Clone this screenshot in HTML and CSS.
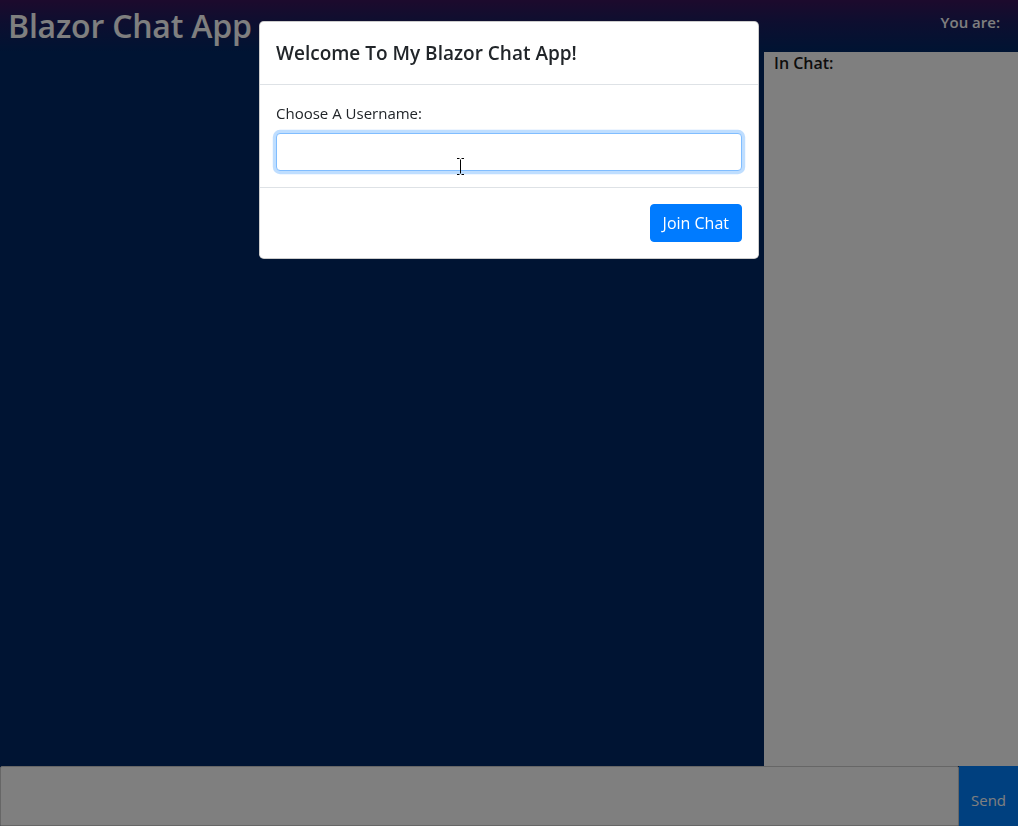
FILE: index.html
```html
<!DOCTYPE html>
<html lang="en">
<head>
<meta charset="utf-8">
<title>Blazor Chat App</title>
<link rel="stylesheet" href="styles.css">
</head>
<body>
<div class="app">
  <header class="top">
    <h1 class="brand">Blazor Chat App</h1>
    <div class="you">You are:</div>
  </header>
  <main class="main">
    <section class="messages"></section>
    <aside class="users"><div class="users-title">In Chat:</div></aside>
  </main>
  <footer class="composer">
    <input class="msg" type="text">
    <button class="send">Send</button>
  </footer>
</div>

<div class="backdrop"></div>
<div class="modal">
  <div class="dialog">
    <div class="m-header"><h5 class="m-title">Welcome To My Blazor Chat App!</h5></div>
    <div class="m-body">
      <label class="m-label">Choose A Username:</label>
      <div class="field">
        <input class="m-input" type="text">
        <svg class="ibeam" width="9" height="17" viewBox="0 0 9 17"><path d="M1 0.5h2.5M5.5 0.5H8M4.5 1.5v14M1 16.5h2.5M5.5 16.5H8" stroke="#000" stroke-width="1" fill="none"/></svg>
      </div>
    </div>
    <div class="m-footer"><button class="join">Join Chat</button></div>
  </div>
</div>
</body>
</html>
```
FILE: styles.css
```css
* { box-sizing: border-box; }
html, body { margin: 0; padding: 0; height: 100%; }
body {
  font-family: "Open Sans", "Noto Sans", sans-serif;
  font-size: 15px;
  color: #212529;
  overflow: hidden;
}
.app {
  height: 826px;
  display: flex;
  flex-direction: column;
  background: #002866;
}
.top {
  height: 52px;
  flex: none;
  display: flex;
  justify-content: space-between;
  align-items: flex-start;
  background: linear-gradient(to bottom, #3a145a 0%, #1a1e60 45%, #002866 100%);
  padding: 0 18px 0 8px;
}
.brand {
  margin: 0;
  font-size: 32px;
  font-weight: 600;
  line-height: 52px;
  color: #fff;
  letter-spacing: -0.2px;
}
.you {
  font-weight: 600;
  font-size: 15px;
  color: #fff;
  line-height: 44px;
}
.main {
  flex: 1;
  display: flex;
  min-height: 0;
}
.messages { flex: 1; }
.users {
  width: 254px;
  flex: none;
  background: #fff;
  padding: 0 10px;
}
.users-title {
  font-weight: 600;
  font-size: 16px;
  line-height: 22px;
  color: #1a1a1a;
}
.composer {
  height: 60px;
  flex: none;
  display: flex;
}
.msg {
  flex: 1;
  border: 1px solid #ccc;
  border-radius: 2px 2px 0 0;
  background: #fff;
  margin: 0;
}
.send {
  width: 59px;
  border: none;
  background: #0080ff;
  color: #fff;
  font-family: inherit;
  font-size: 15px;
  padding: 8px 0 0;
  margin: 0;
}
.backdrop {
  position: fixed;
  inset: 0;
  background: rgba(0, 0, 0, 0.5);
}
.modal {
  position: fixed;
  inset: 0;
  display: flex;
  justify-content: center;
  align-items: flex-start;
}
.dialog {
  margin-top: 21px;
  width: 500px;
  background: #fff;
  border: 1px solid rgba(0, 0, 0, 0.2);
  border-radius: 4.8px;
}
.m-header {
  padding: 16px;
  border-bottom: 1px solid #dee2e6;
}
.m-title {
  margin: 0;
  font-size: 19px;
  font-weight: 600;
  line-height: 30px;
}
.m-body { padding: 16px; }
.m-label {
  display: block;
  line-height: 24px;
  margin-bottom: 8px;
}
.field { position: relative; }
.m-input {
  display: block;
  width: 100%;
  height: 38px;
  border: 1px solid #80bdff;
  border-radius: 4px;
  box-shadow: 0 0 0 3.2px rgba(0, 123, 255, 0.25);
  outline: none;
  margin: 0;
}
.ibeam {
  position: absolute;
  left: 180px;
  top: 25px;
}
.m-footer {
  padding: 12px;
  border-top: 1px solid #dee2e6;
  display: flex;
  justify-content: flex-end;
}
.join {
  margin: 4px;
  height: 38px;
  padding: 0 12px;
  border: 1px solid #007bff;
  background: #007bff;
  color: #fff;
  font-family: inherit;
  font-size: 16px;
  border-radius: 4px;
}
```
